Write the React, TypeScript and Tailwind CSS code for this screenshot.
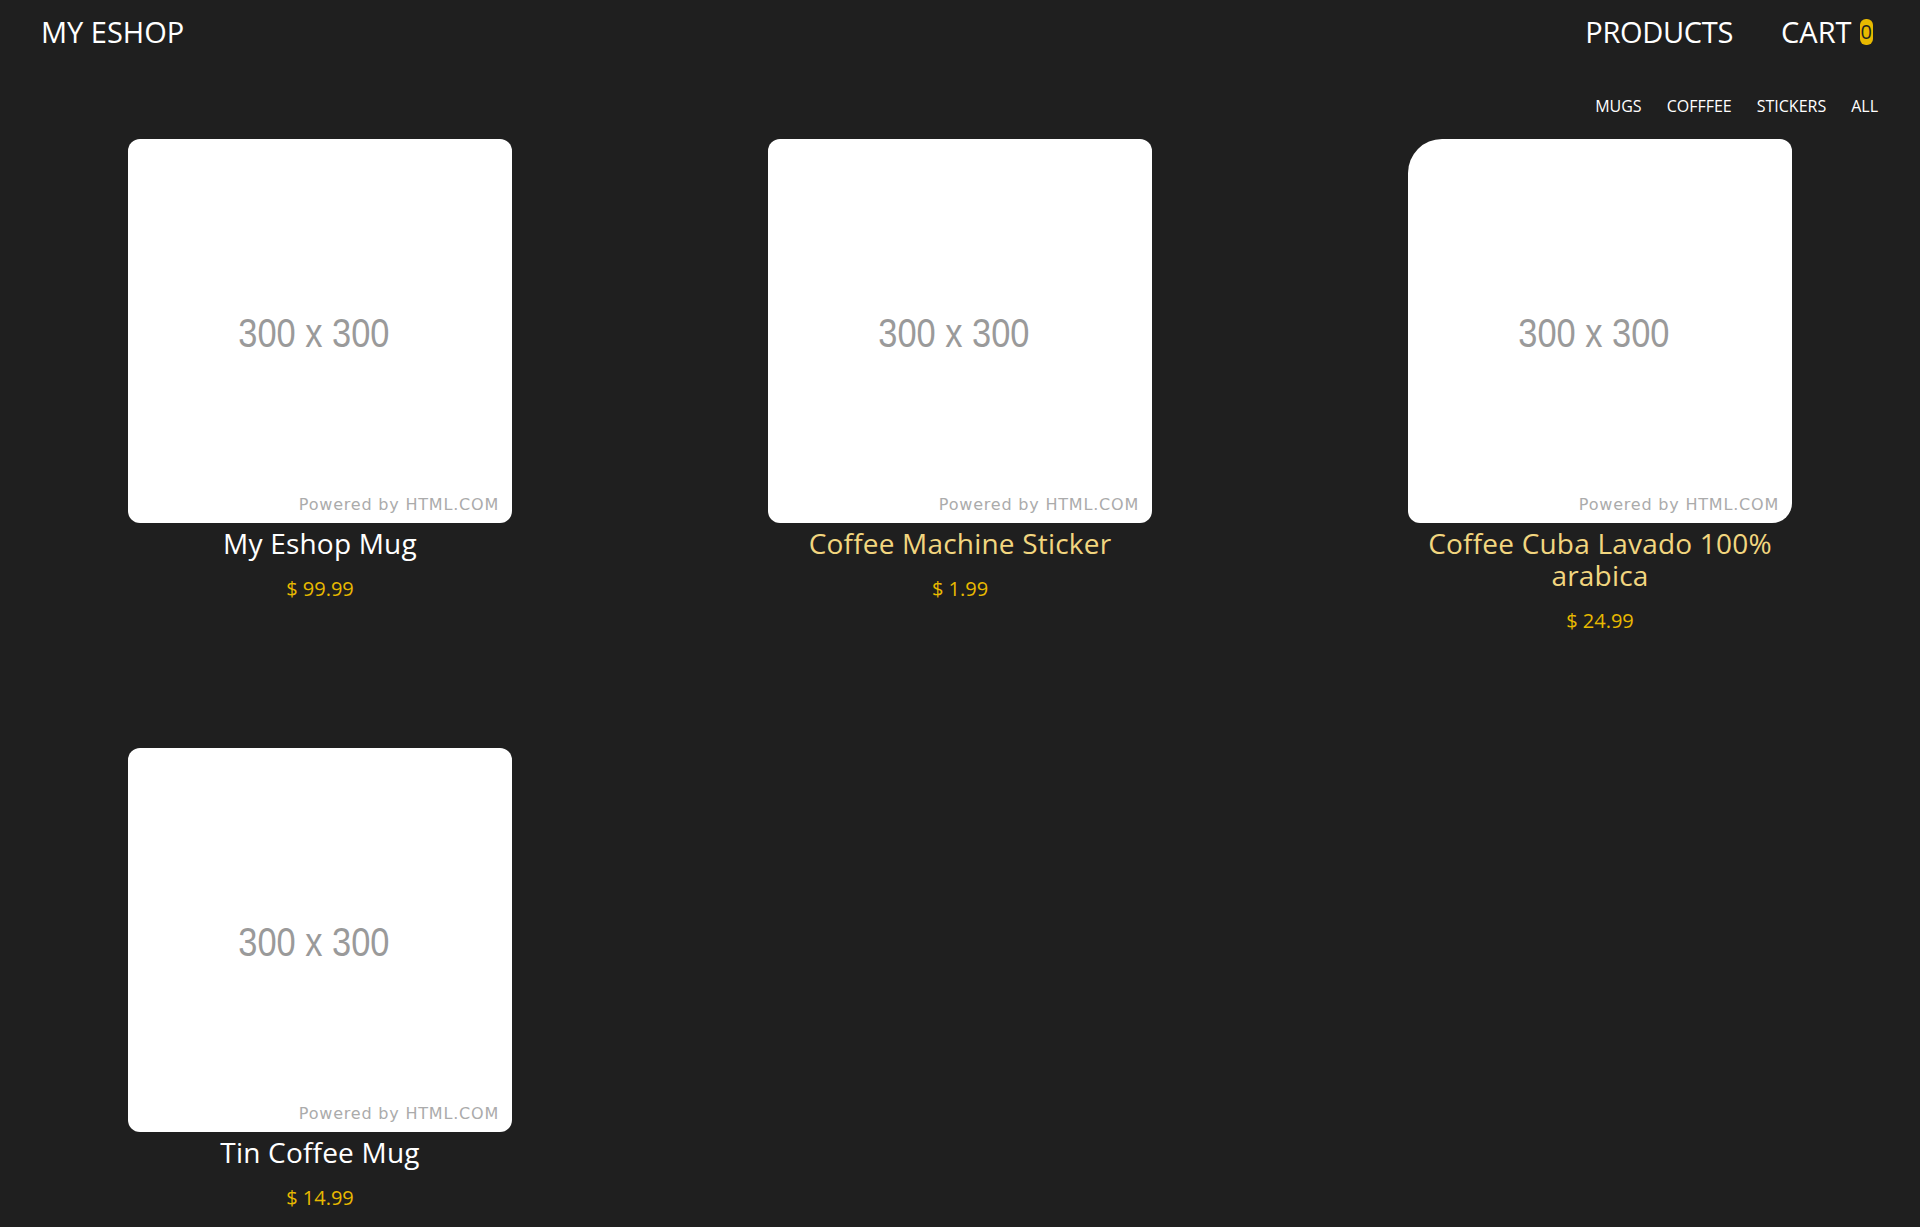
import React from "react";

type Product = {
  name: string;
  price: string;
  highlight?: boolean;
  cardCls?: string;
};

const PRODUCTS: Product[] = [
  { name: "My Eshop Mug", price: "$ 99.99" },
  { name: "Coffee Machine Sticker", price: "$ 1.99", highlight: true },
  {
    name: "Coffee Cuba Lavado 100% arabica",
    price: "$ 24.99",
    highlight: true,
    cardCls: "rounded-xl rounded-tl-[34px] rounded-br-[20px]",
  },
  { name: "Tin Coffee Mug", price: "$ 14.99" },
];

const CATEGORIES = ["MUGS", "COFFFEE", "STICKERS", "ALL"];

function Placeholder({ cls }: { cls?: string }) {
  return (
    <div className={`relative w-[384px] h-[384px] bg-white flex items-center justify-center ${cls ?? "rounded-xl"}`}>
      <span
        className="text-[40px] leading-none text-[#9a9a9a] scale-x-[0.86] -translate-x-[6px] translate-y-[2px]"
        style={{ fontFamily: "'Liberation Sans', Arial, sans-serif" }}
      >
        300 x 300
      </span>
      <span
        className="absolute right-[13px] bottom-[10px] text-[16px] leading-none text-[#ababab] tracking-[0.8px]"
        style={{ fontFamily: "'DejaVu Sans', sans-serif" }}
      >
        Powered by HTML.COM
      </span>
    </div>
  );
}

function ProductCard({ p }: { p: Product }) {
  return (
    <div className="flex flex-col items-center">
      <Placeholder cls={p.cardCls} />
      <div className={`w-[384px] mt-[4px] text-center text-[28px] leading-[32px] tracking-[0.2px] ${p.highlight ? "text-[#f2d67f]" : "text-white"}`}>
        {p.name}
      </div>
      <div className="mt-[16px] text-[20px] leading-[28px] text-[#e8b900]">{p.price}</div>
    </div>
  );
}

export default function App() {
  return (
    <div
      className="min-h-[1227px] w-full bg-[#1f1f1f] text-white"
      style={{ fontFamily: "'Open Sans', 'Noto Sans', sans-serif" }}
    >
      {/* Top bar */}
      <header className="flex items-start justify-between pl-[41px] pr-[47px] pt-[11px]">
        <div className="text-[29px] leading-[41px]">MY ESHOP</div>
        <nav className="flex items-start gap-[48px] text-[29px] leading-[41px]">
          <span className="tracking-[-0.3px]">PRODUCTS</span>
          <span className="flex items-center gap-[8px]">
            CART
            <span className="inline-flex items-center justify-center h-[26px] px-[1px] rounded-[6px] bg-[#e8b900] text-[#1f1f1f] text-[20px] leading-none">
              0
            </span>
          </span>
        </nav>
      </header>

      {/* Category filter */}
      <div className="flex justify-end gap-[25px] pr-[42px] mt-[43px] text-[16px] leading-[22px] text-white">
        {CATEGORIES.map((c) => (
          <span key={c}>{c}</span>
        ))}
      </div>

      {/* Products */}
      <div className="grid grid-cols-3 gap-y-[113px] mt-[22px]">
        {PRODUCTS.map((p) => (
          <ProductCard key={p.name} p={p} />
        ))}
      </div>
    </div>
  );
}
